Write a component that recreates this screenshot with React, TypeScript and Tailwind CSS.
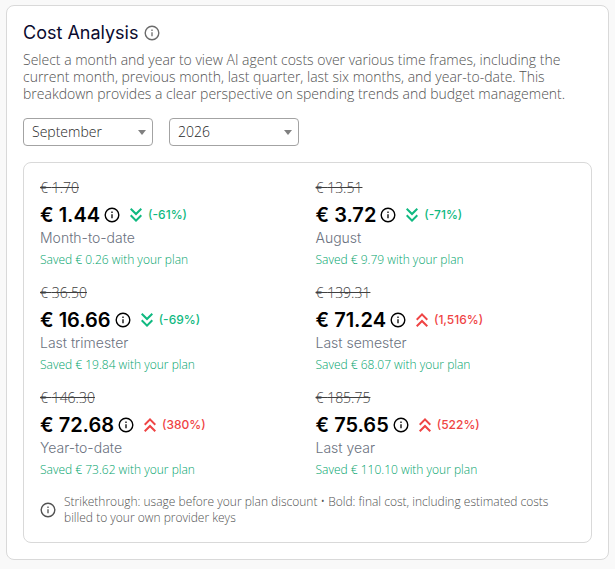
import { useState } from "react";
import { MdKeyboardDoubleArrowDown, MdKeyboardDoubleArrowUp } from "react-icons/md";

interface CostPeriod {
  label: string;
  original: string;
  cost: string;
  change: string;
  rising: boolean;
  saved: string;
}

const periods: CostPeriod[] = [
  { label: "Month-to-date", original: "1.70", cost: "1.44", change: "-61%", rising: false, saved: "0.26" },
  { label: "August", original: "13.51", cost: "3.72", change: "-71%", rising: false, saved: "9.79" },
  { label: "Last trimester", original: "36.50", cost: "16.66", change: "-69%", rising: false, saved: "19.84" },
  { label: "Last semester", original: "139.31", cost: "71.24", change: "1,516%", rising: true, saved: "68.07" },
  { label: "Year-to-date", original: "146.30", cost: "72.68", change: "380%", rising: true, saved: "73.62" },
  { label: "Last year", original: "185.75", cost: "75.65", change: "522%", rising: true, saved: "110.10" },
];

const months = [
  "January", "February", "March", "April", "May", "June",
  "July", "August", "September", "October", "November", "December",
];

const years = ["2024", "2025", "2026"];

function InfoIcon() {
  return (
    <svg width="16" height="16" viewBox="0 0 16 16" fill="none" stroke="currentColor" className="shrink-0">
      <circle cx="8" cy="8" r="6.8" strokeWidth="1.4" />
      <path d="M8 7.2v4M8 4.6v1.3" strokeWidth="1.3" />
    </svg>
  );
}

interface PickerProps {
  label: string;
  value: string;
  options: string[];
  onChange: (value: string) => void;
}

function Picker({ label, value, options, onChange }: PickerProps) {
  return (
    <div className="relative w-[130px]">
      <select
        aria-label={label}
        value={value}
        onChange={(e) => onChange(e.target.value)}
        className="block h-7 w-full appearance-none rounded border border-[#a3a3a3] bg-white pl-2 pr-6 text-sm font-light text-[#262626]"
      >
        {options.map((option) => (
          <option key={option}>{option}</option>
        ))}
      </select>
      <svg width="8" height="5" viewBox="0 0 8 5" className="pointer-events-none absolute right-[7px] top-3 fill-[#808080]">
        <path d="M0 0h8L4 5z" />
      </svg>
    </div>
  );
}

function PeriodCost({ period }: { period: CostPeriod }) {
  const Arrow = period.rising ? MdKeyboardDoubleArrowUp : MdKeyboardDoubleArrowDown;

  return (
    <div>
      <s className="block text-sm leading-[18px] font-light text-[#404040]">€ {period.original}</s>
      <div className="mt-1 flex h-7 items-center font-[Inter,sans-serif]">
        <span className="text-xl font-semibold text-black">€ {period.cost}</span>
        <button type="button" aria-label={`About ${period.label}`} className="ml-1 text-black">
          <InfoIcon />
        </button>
        <span className={`ml-1 flex items-center text-xs font-medium ${period.rising ? "text-[#ef4444]" : "text-[#10b981]"}`}>
          <Arrow size={24} />
          ({period.change})
        </span>
      </div>
      <p className="font-[Inter,sans-serif] text-sm leading-[18px] font-light text-[#6b7280]">{period.label}</p>
      <p className="mt-[5px] text-xs leading-4 font-light text-[#00a36c]">Saved € {period.saved} with your plan</p>
    </div>
  );
}

export default function App() {
  const [month, setMonth] = useState("September");
  const [year, setYear] = useState("2026");

  return (
    <main className="min-h-screen bg-[#f9f9f9] px-1.5 pt-[5px] pb-2 font-['Open_Sans',sans-serif]">
      <section className="rounded-lg border border-[#d9d9d9] bg-white p-4">
        <div className="flex items-center gap-1.5 font-[Inter,sans-serif]">
          <h1 className="text-lg leading-[22px] text-[#0a0a2e]">Cost Analysis</h1>
          <button type="button" aria-label="About cost analysis" className="text-[#6b6b6b]">
            <InfoIcon />
          </button>
        </div>
        <p className="mt-[7px] text-sm leading-[17px] font-light text-[#525252]">
          Select a month and year to view AI agent costs over various time frames, including the
          current month, previous month, last quarter, last six months, and year-to-date. This
          breakdown provides a clear perspective on spending trends and budget management.
        </p>

        <div className="mt-4 flex gap-4">
          <Picker label="Month" value={month} options={months} onChange={setMonth} />
          <Picker label="Year" value={year} options={years} onChange={setYear} />
        </div>

        <div className="mt-4 rounded-lg border border-[#d9d9d9] p-4">
          <div className="grid grid-cols-2 gap-4">
            {periods.map((period) => (
              <PeriodCost key={period.label} period={period} />
            ))}
          </div>
          <div className="mt-4 flex items-center gap-2 text-[#525252]">
            <InfoIcon />
            <p className="text-xs leading-4 font-light">
              Strikethrough: usage before your plan discount • Bold: final cost, including estimated costs
              billed to your own provider keys
            </p>
          </div>
        </div>
      </section>
    </main>
  );
}
